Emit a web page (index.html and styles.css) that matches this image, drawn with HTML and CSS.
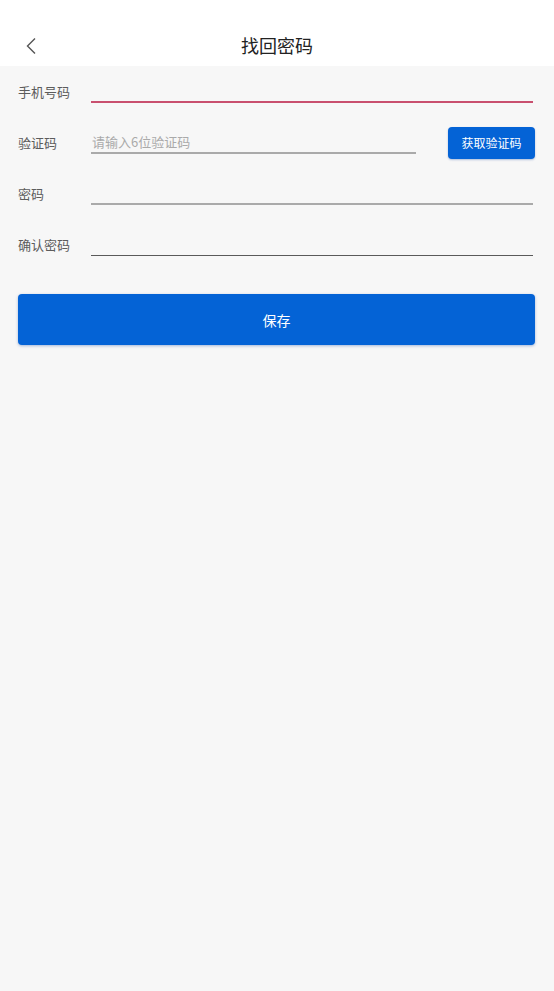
FILE: index.html
```html
<!DOCTYPE html>
<html lang="zh">
<head>
<meta charset="utf-8">
<title>找回密码</title>
<link rel="stylesheet" href="styles.css">
</head>
<body>
<div class="page">
  <header class="topbar">
    <span class="back">
      <svg width="14" height="18" viewBox="0 0 14 18"><path d="M11 1.5 L3.5 9 L11 16.5" fill="none" stroke="#555" stroke-width="1.4"/></svg>
    </span>
    <h1 class="title">找回密码</h1>
  </header>
  <main class="form">
    <div class="row">
      <label class="label">手机号码</label>
      <div class="field field-focus"></div>
    </div>
    <div class="row">
      <label class="label">验证码</label>
      <div class="field field-code field-gray"><span class="placeholder">请输入6位验证码</span></div>
      <button class="code-btn">获取验证码</button>
    </div>
    <div class="row">
      <label class="label">密码</label>
      <div class="field field-gray"></div>
    </div>
    <div class="row">
      <label class="label">确认密码</label>
      <div class="field field-dark"></div>
    </div>
    <button class="save-btn">保存</button>
  </main>
</div>
</body>
</html>
```

FILE: styles.css
```css
html, body {
  margin: 0;
  padding: 0;
  background: #f7f7f7;
}
body {
  font-family: "Noto Sans CJK SC", "Noto Sans", sans-serif;
  color: #333;
}
.page {
  width: 554px;
  min-height: 991px;
  background: #f7f7f7;
}
.topbar {
  height: 66px;
  background: #ffffff;
  position: relative;
  display: flex;
  align-items: flex-end;
  justify-content: center;
  box-sizing: border-box;
  padding-bottom: 8px;
}
.back {
  position: absolute;
  left: 24px;
  top: 37px;
  width: 14px;
  height: 18px;
  display: block;
}
.back svg { display: block; }
.title {
  margin: 0;
  font-size: 18px;
  font-weight: 400;
  line-height: 26px;
  color: #222;
}
.form {
  padding: 0 18px 0 18px;
}
.row {
  height: 51px;
  display: flex;
  align-items: center;
}
.label {
  width: 73px;
  flex: none;
  font-size: 13px;
  line-height: 18px;
  color: #5c5c5c;
}
.field {
  flex: 1;
  height: 19px;
  box-sizing: content-box;
  margin-right: 3px;
  display: flex;
  align-items: center;
}
.field-focus {
  border-bottom: 2px solid #c9506f;
  margin-bottom: -2px;
}
.field-gray {
  border-bottom: 2px solid #aaaaaa;
  margin-bottom: -2px;
}
.field-dark {
  border-bottom: 1px solid #5a5a5a;
  height: 20px;
  margin-bottom: -1px;
}
.field-code {
  flex: none;
  width: 325px;
  margin-right: 32px;
}
.placeholder {
  font-size: 13px;
  color: #aaaaaa;
  line-height: 18px;
  padding-left: 1px;
  margin-top: -2px;
}
.code-btn {
  width: 87px;
  height: 32px;
  border: none;
  border-radius: 4px;
  background: #0463d6;
  color: #ffffff;
  font-family: inherit;
  font-size: 12px;
  padding: 0;
  box-shadow: 0 1px 2px rgba(0, 60, 160, 0.3);
}
.save-btn {
  display: block;
  width: 517px;
  height: 51px;
  margin-top: 24px;
  border: none;
  border-radius: 4px;
  background: #0463d6;
  color: #ffffff;
  font-family: inherit;
  font-size: 14px;
  padding: 0;
  box-shadow: 0 1px 3px rgba(0, 60, 160, 0.35);
}
```
